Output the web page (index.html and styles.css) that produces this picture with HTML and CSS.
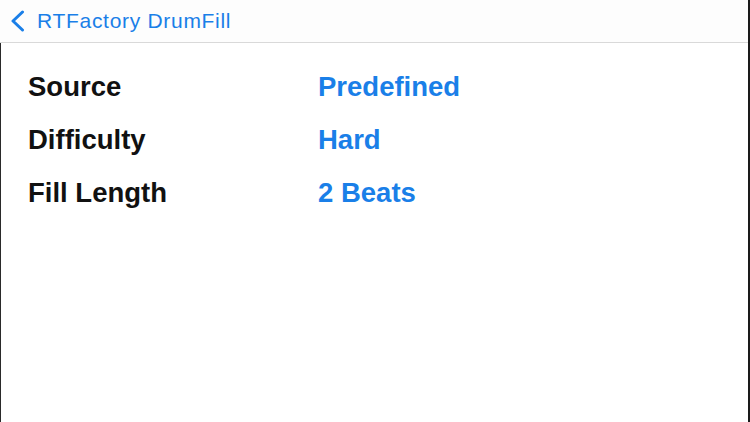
FILE: index.html
```html
<!DOCTYPE html>
<html>
<head>
<meta charset="utf-8">
<link rel="stylesheet" href="styles.css">
</head>
<body>
<div class="screen">
  <header class="navbar">
    <a class="back">
      <svg class="chevron" width="15" height="22" viewBox="0 0 15 22"><path d="M12.5 2 L3 11 L12.5 20" fill="none" stroke="#1a7fe8" stroke-width="3" stroke-linecap="round" stroke-linejoin="round"/></svg>
      <span class="back-title">RTFactory DrumFill</span>
    </a>
  </header>
  <main class="content">
    <div class="row"><span class="label">Source</span><span class="value">Predefined</span></div>
    <div class="row"><span class="label">Difficulty</span><span class="value">Hard</span></div>
    <div class="row"><span class="label">Fill Length</span><span class="value">2 Beats</span></div>
  </main>
</div>
</body>
</html>
```
FILE: styles.css
```css
html, body {
  margin: 0;
  padding: 0;
  background: #ffffff;
}
.screen {
  width: 750px;
  height: 422px;
  box-sizing: border-box;
  border-right: 2px solid #1a1a1a;
  display: flex;
  flex-direction: column;
  font-family: "Liberation Sans", Arial, sans-serif;
  overflow: hidden;
}
.navbar {
  height: 42px;
  flex: none;
  border-bottom: 1px solid #d9d9d9;
  display: flex;
  align-items: center;
  padding-left: 10px;
  background: #fdfdfd;
}
.back {
  display: flex;
  align-items: center;
  color: #1a7fe8;
}
.chevron {
  display: block;
  margin-right: 12px;
  margin-top: -1px;
}
.back-title {
  font-size: 21px;
  letter-spacing: 0.7px;
  margin-top: -1px;
}
.content {
  flex: 1;
  border-left: 1px solid #2a2a2a;
  padding-top: 18px;
  padding-left: 27px;
}
.row {
  display: flex;
  height: 53px;
  line-height: 52px;
  font-size: 27.5px;
  font-weight: bold;
}
.label {
  width: 290px;
  color: #111111;
}
.value {
  color: #1a7fe8;
}
```
